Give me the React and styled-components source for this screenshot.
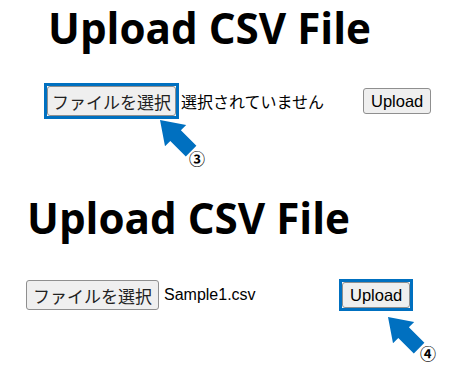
import React from 'react';
import styled, { createGlobalStyle } from 'styled-components';

const GlobalStyle = createGlobalStyle`
    body {
        margin: 0;
        background: #ffffff;
        color: #000000;
        font-family: "Liberation Sans", "Noto Sans CJK JP", sans-serif;
    }
`;

const Page = styled.div`
    width: 475px;
    height: 389px;
    display: flex;
    flex-direction: column;
    overflow: hidden;
`;

// one captured screen of the upload form
const Panel = styled.section`
    position: relative;
    height: ${(props) => props.$height}px;
    padding-left: ${(props) => props.$left}px;
    padding-top: ${(props) => props.$top}px;
    box-sizing: border-box;
`;

const Heading = styled.h1`
    margin: 0 0 0 1px;
    font-family: "Open Sans", "Noto Sans CJK JP", sans-serif;
    font-weight: 700;
    font-size: 42.2px;
    line-height: 50px;
`;

const FormRow = styled.div`
    display: flex;
    align-items: center;
    margin-top: ${(props) => props.$gap}px;
`;

const FileField = styled.div`
    width: 316px;
    display: flex;
    align-items: center;
`;

// square blue frame drawn round the control the step points at
const Highlight = styled.span`
    display: inline-flex;
    margin: -3px;
    border: 3px solid #0070c0;
`;

const FileButton = styled.button`
    height: 30px;
    padding: 0 ${(props) => props.$pad}px;
    margin: 0;
    font-family: "Noto Sans CJK JP", sans-serif;
    font-size: 17px;
    color: #222;
    background: #efefef;
    border: 1px solid #8f8f8f;
    border-radius: 3px;
`;

const FileName = styled.span`
    margin-left: 5px;
    font-size: 16px;
    white-space: nowrap;
`;

const UploadButton = styled.button`
    height: 26px;
    padding: 0 7px;
    margin: 0;
    font-family: "Liberation Sans", sans-serif;
    font-size: 16.5px;
    color: #000;
    background: #efefef;
    border: 1px solid #8f8f8f;
    border-radius: 3px;
`;

const Pointer = styled.svg`
    position: absolute;
    left: ${(props) => props.$x - 2}px;
    top: ${(props) => props.$y - 2}px;
    width: 42px;
    height: 42px;
`;

const StepMark = styled.span`
    position: absolute;
    left: ${(props) => props.$x}px;
    top: ${(props) => props.$y}px;
    font-family: "Noto Sans CJK JP", sans-serif;
    font-size: 16px;
    font-weight: 700;
    line-height: 16px;
    transform: translate(-50%, -50%);
`;

function Arrow({ x, y }) {
    return (
        <Pointer $x={x} $y={y} viewBox="0 0 42 42">
            <polygon
                transform="translate(2 2)"
                fill="#0070c0"
                points="0,0 26.2,5 20.9,10.3 36.4,25.8 25.8,36.4 10.3,20.9 5,26.2"
            />
        </Pointer>
    );
}

function Marked({ on, children }) {
    return on ? <Highlight>{children}</Highlight> : children;
}

function UploadForm({ gap, fileName, mark }) {
    return (
        <>
            <Heading>Upload CSV File</Heading>
            <FormRow $gap={gap}>
                <FileField>
                    <Marked on={mark === 'file'}>
                        <FileButton $pad={mark === 'file' ? 4 : 6}>ファイルを選択</FileButton>
                    </Marked>
                    <FileName>{fileName}</FileName>
                </FileField>
                <Marked on={mark === 'upload'}>
                    <UploadButton>Upload</UploadButton>
                </Marked>
            </FormRow>
        </>
    );
}

export default function App() {
    return (
        <Page>
            <GlobalStyle />
            <Panel $height={190} $left={47} $top={3}>
                <UploadForm gap={33} fileName="選択されていません" mark="file" />
                <Arrow x={160} y={120} />
                <StepMark $x={197} $y={158}>③</StepMark>
            </Panel>
            <Panel $height={199} $left={26} $top={3}>
                <UploadForm gap={37} fileName="Sample1.csv" mark="upload" />
                <Arrow x={388} y={127} />
                <StepMark $x={428} $y={163}>④</StepMark>
            </Panel>
        </Page>
    );
}
